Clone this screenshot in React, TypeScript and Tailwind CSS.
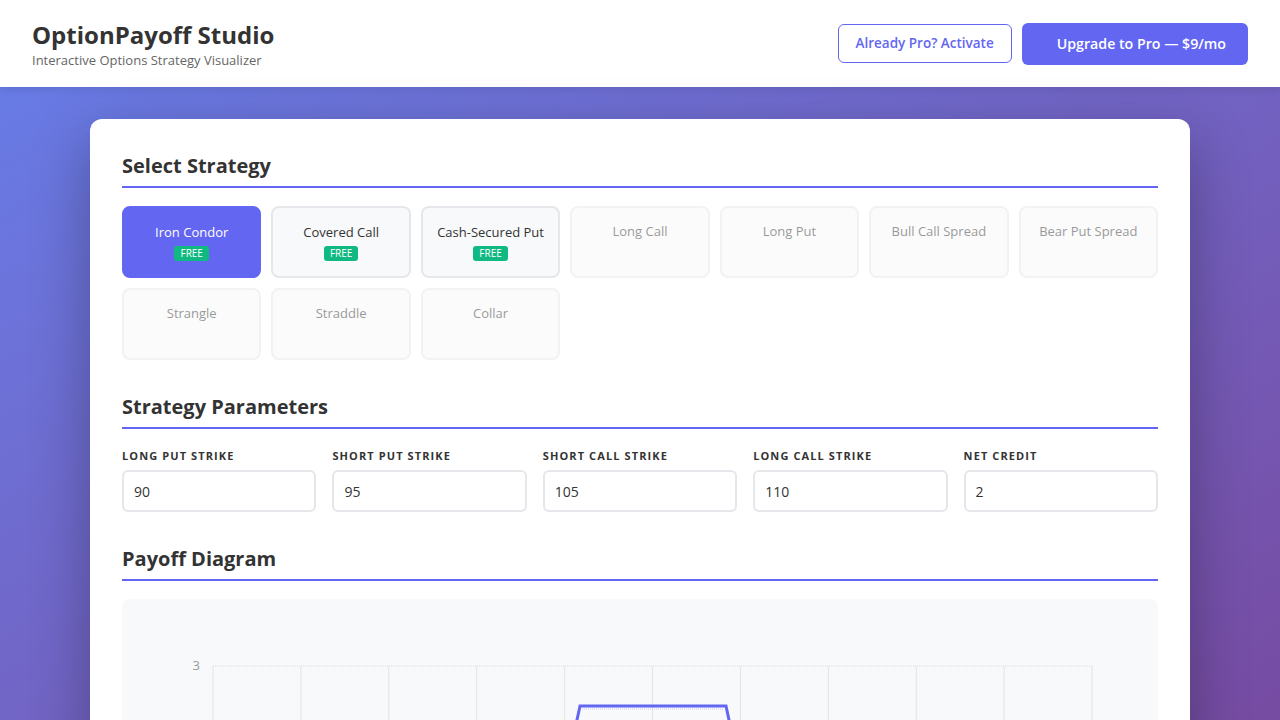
import React from "react";

const strategies = [
  { name: "Iron Condor", free: true, active: true },
  { name: "Covered Call", free: true },
  { name: "Cash-Secured Put", free: true },
  { name: "Long Call" },
  { name: "Long Put" },
  { name: "Bull Call Spread" },
  { name: "Bear Put Spread" },
  { name: "Strangle" },
  { name: "Straddle" },
  { name: "Collar" },
];

const params = [
  { label: "Long Put Strike", value: "90" },
  { label: "Short Put Strike", value: "95" },
  { label: "Short Call Strike", value: "105" },
  { label: "Long Call Strike", value: "110" },
  { label: "Net Credit", value: "2" },
];

function Heading({ children }: { children: React.ReactNode }) {
  return (
    <h2 className="text-[20px] leading-[30px] font-bold text-[#333] pb-[5px] border-b-2 border-[#6366f1] mb-[18px]">
      {children}
    </h2>
  );
}

function Chart() {
  const left = 71;
  const right = 950;
  const cols = 10;
  const colW = (right - left) / cols;
  const vlines = Array.from({ length: cols + 1 }, (_, i) => left + i * colW);
  const pts = [
    [left, 287],
    [395, 287],
    [438, 87],
    [584, 87],
    [627, 287],
    [right, 287],
  ];
  return (
    <svg width="996" height="400" viewBox="0 0 996 400" className="block">
      {vlines.map((x, i) => (
        <line key={i} x1={x} y1={47} x2={x} y2={287} stroke="#e3e4e8" strokeWidth="1" />
      ))}
      <line x1={left} y1={47} x2={right} y2={47} stroke="#dcdde2" strokeWidth="1" strokeDasharray="1 1" />
      <line x1={440} y1={90} x2={582} y2={90} stroke="#c8c9e8" strokeWidth="1" strokeDasharray="1 1" />
      <text x={58} y={51} textAnchor="end" fontSize="13" fill="#999" fontFamily="Open Sans, sans-serif">3</text>
      <polyline
        points={pts.map((p) => p.join(",")).join(" ")}
        fill="none"
        stroke="#6366f1"
        strokeWidth="3"
        strokeLinejoin="miter"
      />
    </svg>
  );
}

export default function App() {
  return (
    <div
      className="h-[720px] overflow-hidden bg-gradient-to-br from-[#667eea] to-[#764ba2] text-[#333]"
      style={{ fontFamily: '"Open Sans", "Noto Sans", sans-serif' }}
    >
      <header className="bg-white h-[87px] px-8 flex items-center justify-between shadow-[0_2px_10px_rgba(0,0,0,0.1)]">
        <div className="pt-[2px]">
          <h1 className="text-[24px] leading-[29px] font-bold text-[#333]">OptionPayoff Studio</h1>
          <p className="text-[13px] leading-[18px] text-[#666] mt-[2px]">Interactive Options Strategy Visualizer</p>
        </div>
        <div className="flex items-center gap-[10px]">
          <button className="h-[39px] px-[17px] border border-[#6366f1] rounded-[6px] text-[13.5px] font-semibold text-[#6366f1] bg-white">
            Already Pro? Activate
          </button>
          <button className="h-[42px] pl-[35px] pr-[22px] rounded-[6px] bg-[#6366f1] text-white text-[14.2px] font-semibold">
            Upgrade to Pro — $9/mo
          </button>
        </div>
      </header>

      <main className="pt-8 flex justify-center">
        <div className="w-[1100px] bg-white rounded-[12px] p-8 shadow-[0_20px_60px_rgba(0,0,0,0.3)]">
          <section>
            <Heading>Select Strategy</Heading>
            <div className="grid grid-cols-7 gap-[10px]">
              {strategies.map((s) => (
                <div
                  key={s.name}
                  className={
                    s.active
                      ? "h-[72px] rounded-[8px] border-2 border-[#6366f1] bg-[#6366f1] text-white pt-[15px] flex flex-col items-center"
                      : s.free
                      ? "h-[72px] rounded-[8px] border-2 border-[#e5e7eb] bg-[#f8f9fa] text-[#333] pt-[15px] flex flex-col items-center"
                      : "h-[72px] rounded-[8px] border-2 border-[#e5e7eb] bg-[#f8f9fa] text-[#333] pt-[14px] flex flex-col items-center opacity-50"
                  }
                >
                  <span className="text-[13px] leading-[18px]">{s.name}</span>
                  {s.free && (
                    <span className="mt-[5px] bg-[#10b981] text-white text-[10px] leading-[15px] px-[6px] rounded-[3px]">
                      FREE
                    </span>
                  )}
                </div>
              ))}
            </div>
          </section>

          <section className="mt-8">
            <Heading>Strategy Parameters</Heading>
            <div className="grid grid-cols-5 gap-4">
              {params.map((p) => (
                <div key={p.label} className="flex flex-col">
                  <label className="text-[11px] leading-[16px] font-bold uppercase tracking-[1.1px] text-[#333] mt-[1px] mb-[6px]">
                    {p.label}
                  </label>
                  <input
                    readOnly
                    value={p.value}
                    className="h-[42px] border-2 border-[#e5e7eb] rounded-[6px] px-[10px] text-[14px] text-[#333] outline-none"
                  />
                </div>
              ))}
            </div>
          </section>

          <section className="mt-8">
            <Heading>Payoff Diagram</Heading>
            <div className="bg-[#f8f9fa] rounded-[8px] p-5 mt-[1px]">
              <Chart />
            </div>
          </section>
        </div>
      </main>
    </div>
  );
}
